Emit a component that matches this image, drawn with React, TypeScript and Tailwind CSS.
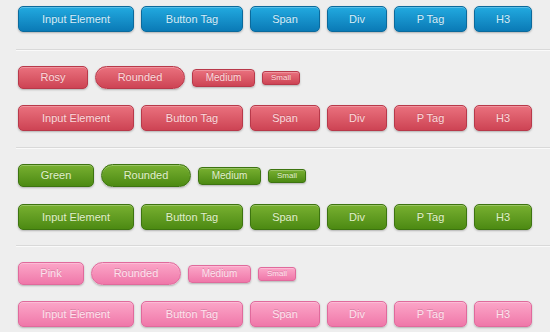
import React from "react";

type Tone = "blue" | "rosy" | "green" | "pink";

const tones: Record<Tone, string> = {
  blue: "bg-gradient-to-b from-[#22aae0] to-[#0a7ab6] border-[#0b6a9c] text-[#d6ecf7]",
  rosy: "bg-gradient-to-b from-[#ea717e] to-[#cd4354] border-[#b8394a] text-[#fad9dc]",
  green: "bg-gradient-to-b from-[#78b030] to-[#4c8a12] border-[#3d7410] text-[#e0efcc]",
  pink: "bg-gradient-to-b from-[#fba6c8] to-[#ef77a9] border-[#e06a9c] text-[#fde2ed]",
};

const big = [
  { label: "Input Element", w: "w-[116px]" },
  { label: "Button Tag", w: "w-[102px]" },
  { label: "Span", w: "w-[70px]" },
  { label: "Div", w: "w-[60px]" },
  { label: "P Tag", w: "w-[73px]" },
  { label: "H3", w: "w-[58px]" },
];

const Btn: React.FC<{ tone: Tone; className: string; children: React.ReactNode }> = ({
  tone,
  className,
  children,
}) => (
  <div
    className={`flex items-center justify-center border shadow-[0_1px_2px_rgba(0,0,0,0.25),inset_0_1px_0_rgba(255,255,255,0.25)] [text-shadow:0_-1px_0_rgba(0,0,0,0.15)] ${tones[tone]} ${className}`}
  >
    {children}
  </div>
);

const BigRow: React.FC<{ tone: Tone }> = ({ tone }) => (
  <div className="flex gap-[7px]">
    {big.map((b) => (
      <Btn key={b.label} tone={tone} className={`${b.w} h-[26px] rounded-[5px] text-[11px]`}>
        {b.label}
      </Btn>
    ))}
  </div>
);

const SmallRow: React.FC<{ tone: Tone; name: string; w: string }> = ({ tone, name, w }) => (
  <div className="flex items-center gap-[7px]">
    <Btn tone={tone} className={`${w} h-[23px] rounded-[5px] text-[11px]`}>
      {name}
    </Btn>
    <Btn tone={tone} className="w-[90px] h-[23px] rounded-full text-[11px]">
      Rounded
    </Btn>
    <Btn tone={tone} className="w-[63px] h-[18px] rounded-[4px] text-[10px]">
      Medium
    </Btn>
    <Btn tone={tone} className="w-[38px] h-[14px] rounded-[3px] text-[8px]">
      Small
    </Btn>
  </div>
);

const Divider = () => (
  <div className="-ml-[2px] h-px bg-[#d9d9d9] shadow-[0_1px_0_#fafafa]" />
);

export default function App() {
  return (
    <div
      className="w-[550px] h-[332px] overflow-hidden bg-[#eeeeee] pl-[18px] pt-[6px]"
      style={{ fontFamily: '"Liberation Sans", Arial, sans-serif' }}
    >
      <BigRow tone="blue" />
      <div className="mt-[17px] mb-[16px]">
        <Divider />
      </div>
      <div className="flex flex-col gap-[16px]">
        <SmallRow tone="rosy" name="Rosy" w="w-[70px]" />
        <BigRow tone="rosy" />
      </div>
      <div className="mt-[16px] mb-[16px]">
        <Divider />
      </div>
      <div className="flex flex-col gap-[17px]">
        <SmallRow tone="green" name="Green" w="w-[76px]" />
        <BigRow tone="green" />
      </div>
      <div className="mt-[15px] mb-[16px]">
        <Divider />
      </div>
      <div className="flex flex-col gap-[16px]">
        <SmallRow tone="pink" name="Pink" w="w-[66px]" />
        <BigRow tone="pink" />
      </div>
    </div>
  );
}
